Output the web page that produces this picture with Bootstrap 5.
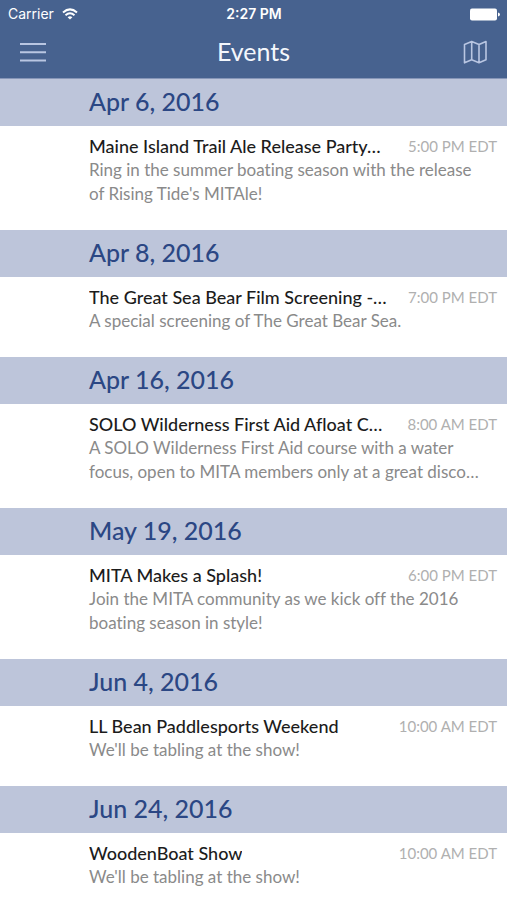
<!DOCTYPE html>
<html lang="en">
<head>
<meta charset="utf-8">
<meta name="viewport" content="width=device-width, initial-scale=1">
<title>Events</title>
<link rel="stylesheet" href="https://cdn.jsdelivr.net/npm/bootstrap@5.3.0/dist/css/bootstrap.min.css">
<style>
  body { font-family: Lato, sans-serif; background: #fff; font-variant-ligatures: none; }
  .app-head { background: #47628f; color: #fff; border-bottom: 1px solid #8796b8; }
  .status-bar { font: 14px/28px Inter, sans-serif; padding: 0 7px 0 8px; }
  .status-time { font-size: 14px; font-weight: 600; }
  .title-bar { height: 50px; padding: 0 19px; }
  .title-bar h1 { font-size: 25px; line-height: 46px; font-weight: 400; color: #f4f7fc; }
  .side { flex: 1 1 0; }
  .icon-btn { color: #b9c6e2; line-height: 0; }
  .day-head { background: #bdc5da; color: #2b4784; font-size: 25px; line-height: 45px; font-weight: 500; padding: 0 10px 2px 89px; }
  .event { padding: 9px 10px 24px 89px; }
  .event-title { color: #1c1c1c; font-size: 18px; line-height: 22px; font-weight: 500; }
  .event-time { color: #b0b0b0; font-size: 15px; line-height: 22px; }
  .event-text { color: #8a8a8a; font-size: 17px; line-height: 24px; padding-top: 1px; }
  .day:last-child .event { padding-bottom: 10px; }
</style>
</head>
<body>
<header class="app-head">
  <div class="status-bar d-flex align-items-center">
    <div class="side d-flex align-items-center gap-2">
      <span>Carrier</span>
      <svg width="16" height="12" viewBox="0 0 16 12" fill="none" stroke="#fff" stroke-width="2" aria-hidden="true"><path d="M1 4.400Q8-1.600 15 4.400M3.500 7.200Q8 3.400 12.500 7.200"/><path d="M5.600 9.200Q8 7.200 10.400 9.200L8 11.600Z" fill="#fff" stroke="none"/></svg>
    </div>
    <span class="status-time">2:27 PM</span>
    <div class="side d-flex justify-content-end align-items-center">
      <svg width="30" height="13" viewBox="0 0 30 13" fill="#fff" aria-hidden="true"><rect x="0" y="0.500" width="27" height="12" rx="2"/><path d="M28 4.500Q30 5 30 6.500T28 8.500Z"/></svg>
    </div>
  </div>
  <nav class="title-bar d-flex align-items-start" aria-label="Main">
    <div class="side"><button type="button" class="btn p-0 border-0 icon-btn mt-2 pt-1" aria-label="Menu"><svg width="28" height="24" viewBox="0 0 28 24" stroke="currentColor" stroke-width="2"><path d="M1 4H27M1 12.200H27M1 20.500H27"/></svg></button></div>
    <h1 class="m-0">Events</h1>
    <div class="side text-end"><button type="button" class="btn p-0 border-0 icon-btn mt-2 pt-1" aria-label="Map"><svg width="25" height="24" viewBox="0 0 25 24" fill="none" stroke="currentColor" stroke-width="1.600" stroke-linejoin="round"><path d="M1.500 4.500L8.700 1.500L16 4.500L23 1.500V19.800L16 22.800L8.700 19.800L1.500 22.800ZM8.700 1.500V19.800M16 4.500V22.800"/></svg></button></div>
  </nav>
</header>
<main>
  <section class="day">
    <h2 class="day-head m-0">Apr 6, 2016</h2>
    <article class="event">
      <div class="d-flex justify-content-between"><h3 class="event-title m-0 text-truncate">Maine Island Trail Ale Release Party…</h3><time class="event-time flex-shrink-0">5:00 PM EDT</time></div>
      <p class="event-text m-0">Ring in the summer boating season with the release<br>of Rising Tide's MITAle!</p>
    </article>
  </section>
  <section class="day">
    <h2 class="day-head m-0">Apr 8, 2016</h2>
    <article class="event">
      <div class="d-flex justify-content-between"><h3 class="event-title m-0 text-truncate">The Great Sea Bear Film Screening -…</h3><time class="event-time flex-shrink-0">7:00 PM EDT</time></div>
      <p class="event-text m-0">A special screening of The Great Bear Sea.</p>
    </article>
  </section>
  <section class="day">
    <h2 class="day-head m-0">Apr 16, 2016</h2>
    <article class="event">
      <div class="d-flex justify-content-between"><h3 class="event-title m-0 text-truncate">SOLO Wilderness First Aid Afloat C…</h3><time class="event-time flex-shrink-0">8:00 AM EDT</time></div>
      <p class="event-text m-0">A SOLO Wilderness First Aid course with a water<br>focus, open to MITA members only at a great disco…</p>
    </article>
  </section>
  <section class="day">
    <h2 class="day-head m-0">May 19, 2016</h2>
    <article class="event">
      <div class="d-flex justify-content-between"><h3 class="event-title m-0 text-truncate">MITA Makes a Splash!</h3><time class="event-time flex-shrink-0">6:00 PM EDT</time></div>
      <p class="event-text m-0">Join the MITA community as we kick off the 2016<br>boating season in style!</p>
    </article>
  </section>
  <section class="day">
    <h2 class="day-head m-0">Jun 4, 2016</h2>
    <article class="event">
      <div class="d-flex justify-content-between"><h3 class="event-title m-0 text-truncate">LL Bean Paddlesports Weekend</h3><time class="event-time flex-shrink-0">10:00 AM EDT</time></div>
      <p class="event-text m-0">We'll be tabling at the show!</p>
    </article>
  </section>
  <section class="day">
    <h2 class="day-head m-0">Jun 24, 2016</h2>
    <article class="event">
      <div class="d-flex justify-content-between"><h3 class="event-title m-0 text-truncate">WoodenBoat Show</h3><time class="event-time flex-shrink-0">10:00 AM EDT</time></div>
      <p class="event-text m-0">We'll be tabling at the show!</p>
    </article>
  </section>
</main>
<script src="https://cdn.jsdelivr.net/npm/bootstrap@5.3.0/dist/js/bootstrap.bundle.min.js"></script>
</body>
</html>
